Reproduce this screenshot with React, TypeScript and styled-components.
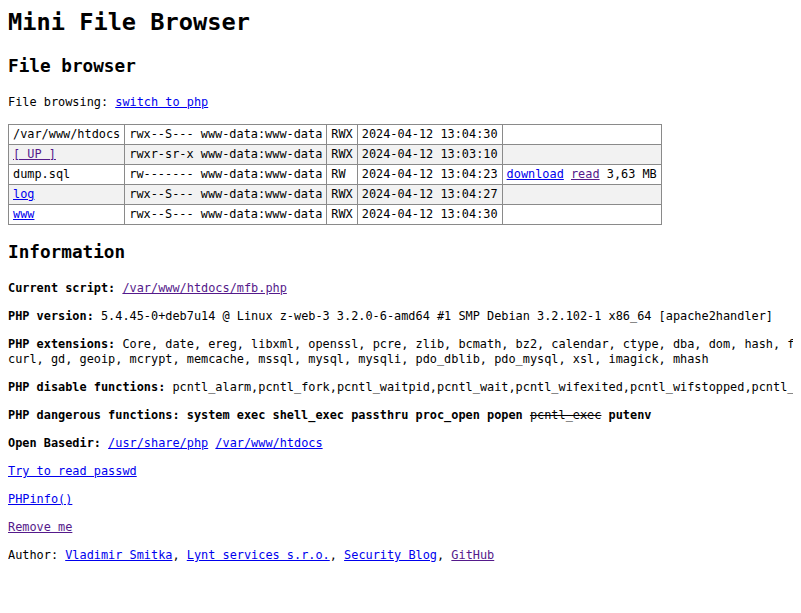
import React from "react";
import styled, { createGlobalStyle } from "styled-components";

const GlobalStyle = createGlobalStyle`
  html {
    overflow-x: hidden;
    background: #fff;
  }
  body {
    margin: 8px;
    font-family: "DejaVu Sans Mono", "Liberation Mono", monospace;
    font-size: 11.88px;
    line-height: 15px;
    color: #000;
    background: #fff;
  }
`;

const Page = styled.main`
  display: block;
`;

const Title = styled.h1`
  font-size: 23.65px;
  line-height: 28px;
  font-weight: bold;
  margin: 0 0 20px;
`;

const SectionTitle = styled.h2`
  font-size: 17.7px;
  line-height: 21px;
  font-weight: bold;
  margin: 17px 0 18px;
`;

const Para = styled.p<{ $nowrap?: boolean }>`
  margin: 13px 0;
  white-space: ${(p) => (p.$nowrap ? "nowrap" : "normal")};
`;

const Label = styled.b`
  font-weight: bold;
`;

const Link = styled.a<{ $visited?: boolean }>`
  color: ${(p) => (p.$visited ? "#551a8b" : "#0000ee")};
  text-decoration: underline;
  cursor: pointer;
`;

const Struck = styled.s`
  font-weight: normal;
`;

const FileTable = styled.table`
  border-collapse: collapse;
  margin: 14px 0 0;
  font-size: 11.88px;
`;

const Row = styled.tr`
  &:nth-child(even) {
    background: #f2f2f2;
  }
`;

const Cell = styled.td`
  border: 1px solid #8a8a8a;
  padding: 2px 4px;
  line-height: 15px;
  white-space: nowrap;
  vertical-align: middle;
`;

type Entry = {
  name: string;
  link?: "blue" | "visited";
  perms: string;
  owner: string;
  access: string;
  date: string;
  actions?: boolean;
};

const entries: Entry[] = [
  { name: "/var/www/htdocs", perms: "rwx--S---", owner: "www-data:www-data", access: "RWX", date: "2024-04-12 13:04:30" },
  { name: "[ UP ]", link: "visited", perms: "rwxr-sr-x", owner: "www-data:www-data", access: "RWX", date: "2024-04-12 13:03:10" },
  { name: "dump.sql", perms: "rw-------", owner: "www-data:www-data", access: "RW", date: "2024-04-12 13:04:23", actions: true },
  { name: "log", link: "blue", perms: "rwx--S---", owner: "www-data:www-data", access: "RWX", date: "2024-04-12 13:04:27" },
  { name: "www", link: "blue", perms: "rwx--S---", owner: "www-data:www-data", access: "RWX", date: "2024-04-12 13:04:30" },
];

const disabled =
  "pcntl_alarm,pcntl_fork,pcntl_waitpid,pcntl_wait,pcntl_wifexited,pcntl_wifstopped,pcntl_wifsignaled,pcntl_wexitstatus,pcntl_wtermsig,pcntl_wstopsig,pcntl_signal,pcntl_signal_dispatch,pcntl_get_last_error,pcntl_strerror,pcntl_sigprocmask,pcntl_sigwaitinfo,pcntl_sigtimedwait,pcntl_exec,pcntl_getpriority,pcntl_setpriority,";

export default function App() {
  return (
    <Page>
      <GlobalStyle />
      <Title>Mini File Browser</Title>

      <SectionTitle>File browser</SectionTitle>
      <Para>
        File browsing: <Link href="#">switch to php</Link>
      </Para>

      <FileTable>
        <tbody>
          {entries.map((e) => (
            <Row key={e.name}>
              <Cell>
                {e.link ? (
                  <Link href="#" $visited={e.link === "visited"}>
                    {e.name === "[ UP ]" ? "[\u00a0UP\u00a0]" : e.name}
                  </Link>
                ) : (
                  e.name
                )}
              </Cell>
              <Cell>
                {e.perms} {e.owner}
              </Cell>
              <Cell>{e.access}</Cell>
              <Cell>{e.date}</Cell>
              <Cell>
                {e.actions ? (
                  <>
                    <Link href="#">download</Link> <Link href="#" $visited>read</Link> 3,63 MB
                  </>
                ) : null}
              </Cell>
            </Row>
          ))}
        </tbody>
      </FileTable>

      <SectionTitle>Information</SectionTitle>
      <Para>
        <Label>Current script:</Label> <Link href="#" $visited>/var/www/htdocs/mfb.php</Link>
      </Para>
      <Para $nowrap>
        <Label>PHP version:</Label> 5.4.45-0+deb7u14 @ Linux z-web-3 3.2.0-6-amd64 #1 SMP Debian 3.2.102-1 x86_64 [apache2handler]
      </Para>
      <Para $nowrap>
        <Label>PHP extensions:</Label> Core, date, ereg, libxml, openssl, pcre, zlib, bcmath, bz2, calendar, ctype, dba, dom, hash, filter, ftp, gettext, gmp, session, iconv, json,
        <br />
        curl, gd, geoip, mcrypt, memcache, mssql, mysql, mysqli, pdo_dblib, pdo_mysql, xsl, imagick, mhash
      </Para>
      <Para $nowrap>
        <Label>PHP disable functions:</Label> {disabled}
      </Para>
      <Para $nowrap>
        <Label>
          PHP dangerous functions: system exec shell_exec passthru proc_open popen <Struck>pcntl_exec</Struck> putenv
        </Label>
      </Para>
      <Para>
        <Label>Open Basedir:</Label> <Link href="#">/usr/share/php</Link> <Link href="#">/var/www/htdocs</Link>
      </Para>
      <Para>
        <Link href="#">Try to read passwd</Link>
      </Para>
      <Para>
        <Link href="#">PHPinfo()</Link>
      </Para>
      <Para>
        <Link href="#" $visited>Remove me</Link>
      </Para>
      <Para>
        Author: <Link href="#">Vladimir Smitka</Link>, <Link href="#">Lynt services s.r.o.</Link>,{" "}
        <Link href="#">Security Blog</Link>, <Link href="#" $visited>GitHub</Link>
      </Para>
    </Page>
  );
}
